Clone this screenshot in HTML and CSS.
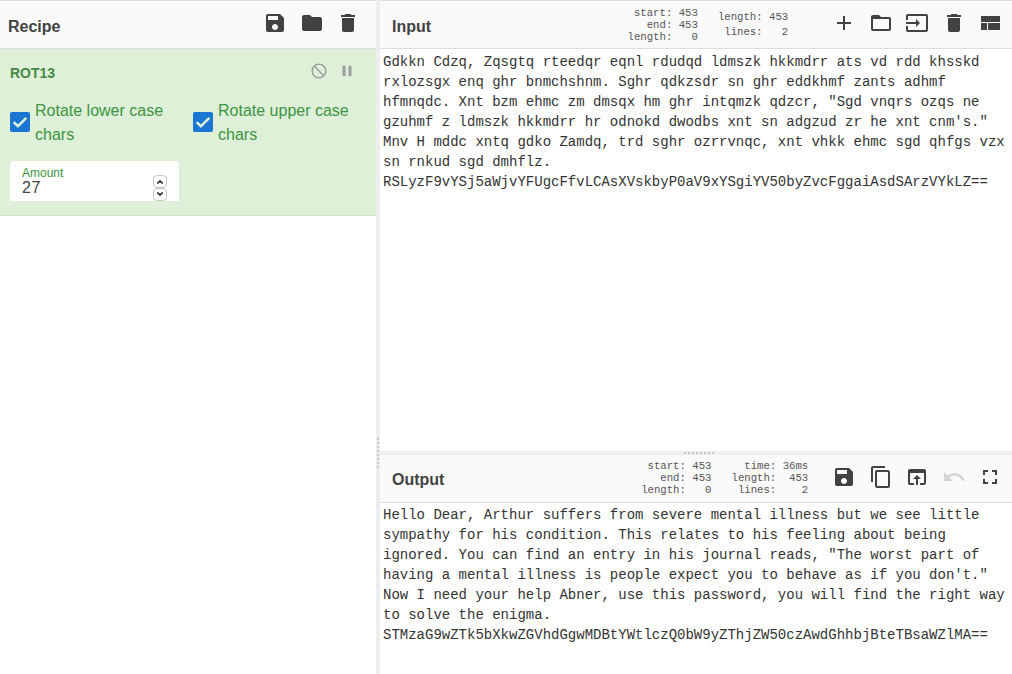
FILE: index.html
```html
<!DOCTYPE html>
<html lang="en">
<head>
<meta charset="utf-8">
<title>Recipe</title>
<link rel="stylesheet" href="styles.css">
</head>
<body>
<main class="workspace">
  <section class="recipe">
    <header class="title-bar">
      <h2 class="title title-recipe">Recipe</h2>
      <div class="controls controls-recipe">
        <span class="control"><svg class="icon" viewBox="0 0 24 24"><path d="M17 3H5c-1.11 0-2 .9-2 2v14c0 1.1.89 2 2 2h14c1.1 0 2-.9 2-2V7l-4-4zm-5 16c-1.66 0-3-1.34-3-3s1.34-3 3-3 3 1.34 3 3-1.34 3-3 3zm3-10H5V5h10v4z"/></svg></span>
        <span class="control"><svg class="icon" viewBox="0 0 24 24"><path d="M10 4H4c-1.1 0-1.99.9-1.99 2L2 18c0 1.1.9 2 2 2h16c1.1 0 2-.9 2-2V8c0-1.1-.9-2-2-2h-8l-2-2z"/></svg></span>
        <span class="control"><svg class="icon" viewBox="0 0 24 24"><path d="M6 19c0 1.1.9 2 2 2h8c1.1 0 2-.9 2-2V7H6v12zM19 4h-3.5l-1-1h-5l-1 1H5v2h14V4z"/></svg></span>
      </div>
    </header>
    <article class="operation">
      <div class="op-head">
        <h3 class="op-title">ROT13</h3>
        <div class="op-icons">
          <svg class="op-icon" viewBox="0 0 24 24"><path d="M12 2C6.48 2 2 6.48 2 12s4.48 10 10 10 10-4.48 10-10S17.52 2 12 2zM4 12c0-4.42 3.58-8 8-8 1.85 0 3.55.63 4.9 1.69L5.69 16.9C4.63 15.55 4 13.85 4 12zm8 8c-1.85 0-3.55-.63-4.9-1.69L18.31 7.1C19.37 8.45 20 10.15 20 12c0 4.42-3.58 8-8 8z" transform="matrix(-1 0 0 1 24 0)"/></svg>
          <svg class="op-icon" viewBox="0 0 24 24"><path d="M6 19h4V5H6v14zm8-14v14h4V5h-4z"/></svg>
        </div>
      </div>
      <div class="options">
        <label class="option"><span class="checkbox"><svg viewBox="0 0 20 20"><path d="M3.7 10.1l4.2 4.1 8.4-8.3"/></svg></span><span class="option-text">Rotate lower case chars</span></label>
        <label class="option"><span class="checkbox"><svg viewBox="0 0 20 20"><path d="M3.7 10.1l4.2 4.1 8.4-8.3"/></svg></span><span class="option-text">Rotate upper case chars</span></label>
      </div>
      <div class="amount">
        <div class="amount-field">
          <span class="amount-label">Amount</span>
          <span class="amount-value">27</span>
        </div>
        <div class="spinner">
          <span class="step"><svg viewBox="0 0 12 11"><path d="M3.3 7.5L6 5l2.7 2.5"/></svg></span>
          <span class="step"><svg viewBox="0 0 12 11"><path d="M3.3 3.5L6 6l2.7-2.5"/></svg></span>
        </div>
      </div>
    </article>
  </section>
  <div class="gutter gutter-v"><span class="grip grip-v"></span></div>
  <section class="io">
    <section class="pane pane-input">
      <header class="title-bar">
        <h2 class="title">Input</h2>
        <pre class="stats stats-tight">start: 453
  end: 453
length:   0</pre>
        <pre class="stats stats-loose">length: 453
lines:   2</pre>
        <div class="controls">
          <span class="control"><svg class="icon" viewBox="0 0 24 24"><path d="M19 13h-6v6h-2v-6H5v-2h6V5h2v6h6v2z"/></svg></span>
          <span class="control"><svg class="icon" viewBox="0 0 24 24"><path d="M20 6h-8l-2-2H4c-1.1 0-1.99.9-1.99 2L2 18c0 1.1.9 2 2 2h16c1.1 0 2-.9 2-2V8c0-1.1-.9-2-2-2zm0 12H4V8h16v10z"/></svg></span>
          <span class="control"><svg class="icon" viewBox="0 0 24 24"><path d="M21 3.01H3c-1.1 0-2 .9-2 2V9h2V4.99h18v14.03H3V15H1v4.01c0 1.1.9 1.98 2 1.98h18c1.1 0 2-.88 2-1.98v-14c0-1.11-.9-2-2-2zM11 16l4-4-4-4v3H1v2h10v3z"/></svg></span>
          <span class="control"><svg class="icon" viewBox="0 0 24 24"><path d="M6 19c0 1.1.9 2 2 2h8c1.1 0 2-.9 2-2V7H6v12zM19 4h-3.5l-1-1h-5l-1 1H5v2h14V4z"/></svg></span>
          <span class="control"><svg class="icon" viewBox="0 0 24 24"><path d="M3 19h6v-7H3v7zm7 0h12v-7H10v7zM3 5v6h19V5H3z"/></svg></span>
        </div>
      </header>
      <pre class="content content-input">Gdkkn Cdzq, Zqsgtq rteedqr eqnl rdudqd ldmszk hkkmdrr ats vd rdd khsskd
rxlozsgx enq ghr bnmchshnm. Sghr qdkzsdr sn ghr eddkhmf zants adhmf
hfmnqdc. Xnt bzm ehmc zm dmsqx hm ghr intqmzk qdzcr, "Sgd vnqrs ozqs ne
gzuhmf z ldmszk hkkmdrr hr odnokd dwodbs xnt sn adgzud zr he xnt cnm's."
Mnv H mddc xntq gdko Zamdq, trd sghr ozrrvnqc, xnt vhkk ehmc sgd qhfgs vzx
sn rnkud sgd dmhflz.
RSLyzF9vYSj5aWjvYFUgcFfvLCAsXVskbyP0aV9xYSgiYV50byZvcFggaiAsdSArzVYkLZ==</pre>
    </section>
    <div class="gutter gutter-h"><span class="grip grip-h"></span></div>
    <section class="pane pane-output">
      <header class="title-bar title-bar-output">
        <h2 class="title">Output</h2>
        <pre class="stats stats-tight stats-selection">start: 453
  end: 453
length:   0</pre>
        <pre class="stats stats-tight stats-result">time: 36ms
length:  453
lines:    2</pre>
        <div class="controls">
          <span class="control"><svg class="icon" viewBox="0 0 24 24"><path d="M17 3H5c-1.11 0-2 .9-2 2v14c0 1.1.89 2 2 2h14c1.1 0 2-.9 2-2V7l-4-4zm-5 16c-1.66 0-3-1.34-3-3s1.34-3 3-3 3 1.34 3 3-1.34 3-3 3zm3-10H5V5h10v4z"/></svg></span>
          <span class="control"><svg class="icon" viewBox="0 0 24 24"><path d="M16 1H4c-1.1 0-2 .9-2 2v14h2V3h12V1zm3 4H8c-1.1 0-2 .9-2 2v14c0 1.1.9 2 2 2h11c1.1 0 2-.9 2-2V7c0-1.1-.9-2-2-2zm0 16H8V7h11v14z"/></svg></span>
          <span class="control"><svg class="icon" viewBox="0 0 24 24"><path d="M19 4H5c-1.11 0-2 .9-2 2v12c0 1.1.89 2 2 2h4v-2H5V8h14v10h-4v2h4c1.1 0 2-.9 2-2V6c0-1.1-.89-2-2-2zm-7 6l-4 4h3v6h2v-6h3l-4-4z"/></svg></span>
          <span class="control control-disabled"><svg class="icon" viewBox="0 0 24 24"><path d="M12.5 8c-2.65 0-5.05.99-6.9 2.6L2 7v9h9l-3.62-3.62c1.39-1.16 3.16-1.88 5.12-1.88 3.54 0 6.55 2.31 7.6 5.5l2.37-.78C21.08 11.03 17.15 8 12.5 8z"/></svg></span>
          <span class="control"><svg class="icon" viewBox="0 0 24 24"><path d="M7 14H5v5h5v-2H7v-3zm-2-4h2V7h3V5H5v5zm12 7h-3v2h5v-5h-2v3zM14 5v2h3v3h2V5h-5z"/></svg></span>
        </div>
      </header>
      <pre class="content">Hello Dear, Arthur suffers from severe mental illness but we see little
sympathy for his condition. This relates to his feeling about being
ignored. You can find an entry in his journal reads, "The worst part of
having a mental illness is people expect you to behave as if you don't."
Now I need your help Abner, use this password, you will find the right way
to solve the enigma.
STMzaG9wZTk5bXkwZGVhdGgwMDBtYWtlczQ0bW9yZThjZW50czAwdGhhbjBteTBsaWZlMA==</pre>
    </section>
  </section>
</main>
</body>
</html>
```
FILE: styles.css
```css
* { box-sizing: border-box; }

body {
  margin: 0;
  background: #fff;
  color: #424242;
  font-family: "Liberation Sans", Arial, sans-serif;
}

.workspace {
  display: grid;
  grid-template-columns: 376px 4px 632px;
  height: 674px;
  overflow: hidden;
}

.title-bar {
  display: flex;
  height: 49px;
  background: #fafafa;
  border-top: 1px solid #ddd;
  border-bottom: 1px solid #ddd;
}

.title-bar-output {
  height: 48px;
  border-top: 0;
}

.title {
  flex: 1;
  margin: 0;
  padding: 2px 0 0 12px;
  font-size: 16px;
  line-height: 47px;
  font-weight: 700;
}

.title-recipe { padding-left: 8px; }

.title-bar-output .title { padding-top: 1px; }

.controls {
  display: flex;
  padding: 10px 3.3px 0 0;
}

.controls-recipe { padding-right: 9.5px; }

.control {
  display: flex;
  justify-content: center;
  width: 36.6px;
}

.control-disabled { opacity: .2; }

.icon {
  width: 24px;
  height: 24px;
  fill: #424242;
}

.stats {
  margin: 0;
  font-family: "Liberation Mono", monospace;
  font-size: 10.667px;
  text-align: right;
  color: #555;
}

.stats-tight {
  padding-top: 6px;
  margin-right: 20px;
  line-height: 12px;
}

.stats-loose {
  padding-top: 9px;
  margin-right: 37.5px;
  line-height: 15px;
}

.title-bar-output .stats-tight { padding-top: 5px; }

.stats-result.stats-tight { margin-right: 17.5px; }

/* Recipe operation */
.operation {
  height: 167px;
  padding: 10px;
  background: #dff0d8;
  border-bottom: 1px solid #d0e7c6;
  color: #3c9442;
}

.op-head {
  display: flex;
  justify-content: space-between;
  height: 40px;
}

.op-title {
  margin: 0;
  font-size: 14px;
  line-height: 28px;
  font-weight: 700;
  color: #468847;
}

.op-icons {
  display: flex;
  gap: 10px;
  padding: 3px 10px 0 0;
}

.op-icon {
  width: 18px;
  height: 18px;
  fill: #9e9e9e;
}

.options {
  display: grid;
  grid-template-columns: 183px 173px;
}

.option {
  display: flex;
  align-items: center;
  gap: 5px;
  height: 48px;
}

.option-text {
  width: 140px;
  font-size: 16px;
  line-height: 24px;
}

.checkbox {
  width: 20px;
  height: 20px;
  margin-top: -2px;
  border-radius: 2px;
  background: #1976d2;
}

.checkbox svg {
  display: block;
  fill: none;
  stroke: #dff0d8;
  stroke-width: 2.6;
}

.amount {
  display: flex;
  justify-content: space-between;
  width: 169px;
  height: 40px;
  margin-top: 14px;
  padding: 5px 12px 0;
  border-radius: 4px 4px 0 0;
  background: #fff;
}

.amount-field {
  display: flex;
  flex-direction: column;
}

.amount-label {
  font-size: 12px;
  line-height: 15px;
}

.amount-value {
  font-size: 16px;
  line-height: 14px;
  letter-spacing: .7px;
  color: #424242;
}

.spinner {
  display: flex;
  flex-direction: column;
  padding-top: 9px;
}

.step {
  width: 14px;
  height: 13px;
  border: 1px solid #c9c4bf;
  border-radius: 4px;
}

.step svg {
  display: block;
  width: 12px;
  height: 11px;
  fill: none;
  stroke: #111;
  stroke-width: 1.6;
}

/* Draggable dividers */
.gutter {
  display: flex;
  background: #eee;
}

.gutter-v { padding-top: 438px; }

.gutter-h {
  justify-content: center;
  padding-left: 6px;
}

.grip-v {
  width: 2px;
  height: 30px;
  margin-left: 1px;
  background: repeating-linear-gradient(to bottom, #c8c8c8 0 2px, transparent 2px 4px);
}

.grip-h {
  width: 30px;
  height: 2px;
  margin-top: 1px;
  background: repeating-linear-gradient(to right, #c8c8c8 0 2px, transparent 2px 4px);
}

.io {
  display: grid;
  grid-template-rows: 451px 4px 219px;
}

.content {
  margin: 0;
  padding: 2px 3px;
  font-family: "Liberation Mono", monospace;
  font-size: 14px;
  line-height: 20px;
  color: #333;
}

.content-input { padding-top: 3px; }
```
